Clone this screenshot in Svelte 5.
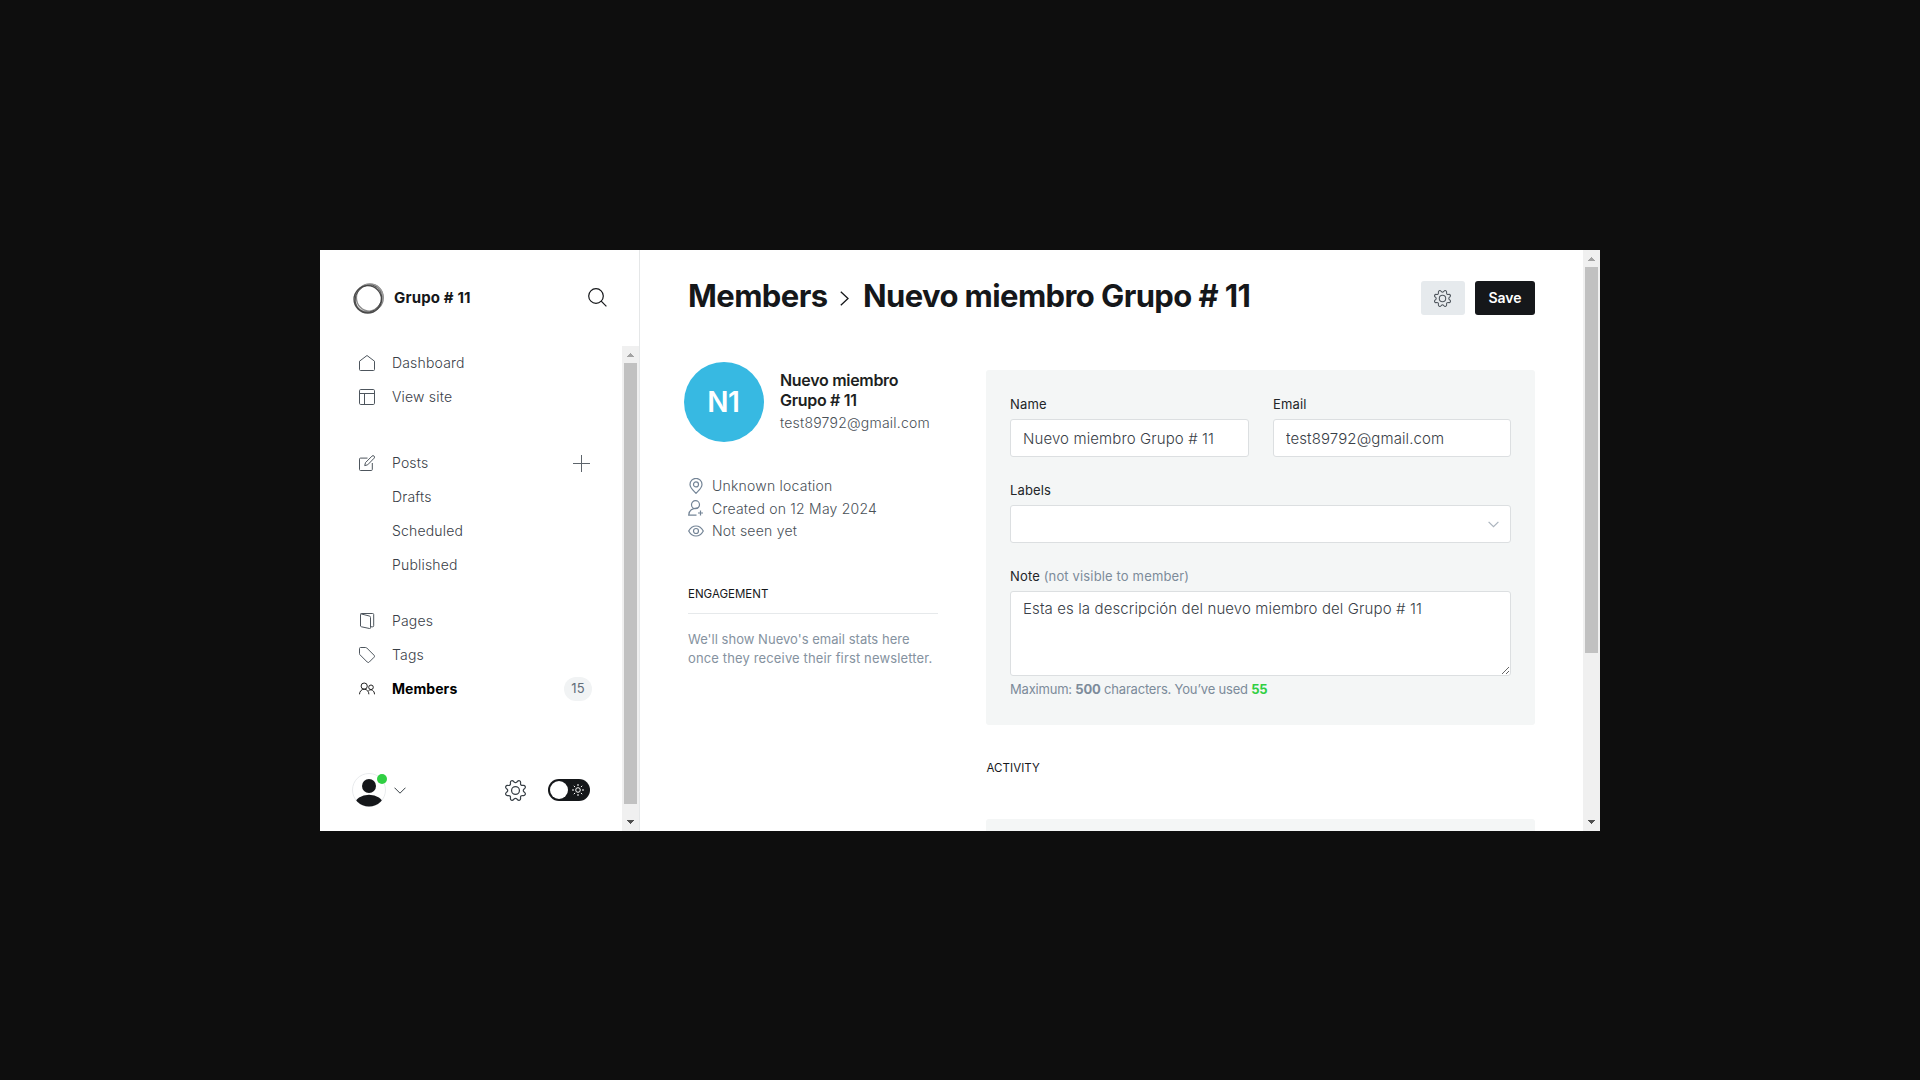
<script>
  const gear =
    'M10.546,2.438a1.957,1.957,0,0,0,2.908,0L14.4,1.4a1.959,1.959,0,0,1,3.41,1.413l-.071,1.4A1.958,1.958,0,0,0,19.79,6.266l1.4-.071A1.959,1.959,0,0,1,22.6,9.6l-1.04.941a1.957,1.957,0,0,0,0,2.908l1.04.942a1.959,1.959,0,0,1-1.413,3.41l-1.4-.071a1.958,1.958,0,0,0-2.056,2.056l.071,1.4A1.959,1.959,0,0,1,14.4,22.6l-.941-1.041a1.959,1.959,0,0,0-2.908,0L9.606,22.6A1.959,1.959,0,0,1,6.2,21.192l.072-1.4a1.958,1.958,0,0,0-2.056-2.056l-1.4.071A1.958,1.958,0,0,1,1.4,14.394l1.041-.942a1.957,1.957,0,0,0,0-2.908L1.4,9.606A1.958,1.958,0,0,1,2.809,6.2l1.4.071A1.958,1.958,0,0,0,6.264,4.211L6.192,2.81A1.959,1.959,0,0,1,9.606,1.4Z';
  let name = $state('Nuevo miembro Grupo # 11');
  let email = $state('test89792@gmail.com');
  let note = $state('Esta es la descripción del nuevo miembro del Grupo # 11');
  const navGroups = [
    [{ label: 'Dashboard', icon: 'home' }, { label: 'View site', icon: 'site' }],
    [{ label: 'Posts', icon: 'posts', add: true }, { label: 'Drafts' }, { label: 'Scheduled' }, { label: 'Published' }],
    [{ label: 'Pages', icon: 'pages' }, { label: 'Tags', icon: 'tags' }, { label: 'Members', icon: 'members', count: 15, active: true }]
  ];
</script>

{#snippet scrollbar(kind)}
  <div class="scrollbar {kind}">
    <svg class="arrow up" viewBox="0 0 17 17"><path d="M5 11h7v-1h-1v-1h-1v-1h-1v-1h-1v1h-1v1h-1v1h-1z" /></svg>
    <div class="thumb"></div>
    <svg class="arrow down" viewBox="0 0 17 17"><path d="M5 6h7v1h-1v1h-1v1h-1v1h-1v-1h-1v-1h-1v-1h-1z" /></svg>
  </div>
{/snippet}

{#snippet navIcon(icon)}
  <svg class="nav-icon" viewBox="0 0 16 16">
    {#if icon === 'home'}
      <path d="M.5 6.2v8.3a1 1 0 0 0 1 1h13a1 1 0 0 0 1-1V6.2L8 .5z" />
    {:else if icon === 'site'}
      <rect x=".5" y=".5" width="15" height="15" rx="1.2" /><path d="M.5 4.500h15M5.500 4.500v11" />
    {:else if icon === 'posts'}
      <path d="M8.500 3.100h-7a1 1 0 0 0-1 1v10.400a1 1 0 0 0 1 1h10.800a1 1 0 0 0 1-1V8" />
      <path d="M8.700 9.800l-3 .8.8-3L13 1.100a1.400 1.400 0 0 1 2.100 2.100z" />
    {:else if icon === 'pages'}
      <path d="M1.500 13V1.500a1 1 0 0 1 1-1h11.200a1 1 0 0 1 1 1v11.300a1 1 0 0 1-1 1h-1.900" />
      <path d="M1.700.800l8.600 2.200a1.500 1.500 0 0 1 1.200 1.500v10.200a.8.8 0 0 1-1 .8l-8-1.700a1.200 1.200 0 0 1-1-1.200" />
    {:else if icon === 'tags'}
      <path d="M1.500.5h5.200a1.500 1.500 0 0 1 1.100.5l7.300 7.300a1.300 1.300 0 0 1 0 1.900l-4.900 4.900a1.300 1.300 0 0 1-1.900 0L1 7.800a1.500 1.500 0 0 1-.5-1.100V1.500a1 1 0 0 1 1-1z" />
    {:else}
      <circle cx="5.200" cy="5.100" r="3.100" /><path d="M.5 13.300c0-2.800 2-5.100 4.700-5.100s4.700 2.300 4.700 5.100" />
      <circle cx="12" cy="6.300" r="2.300" /><path d="M9.500 9.600c2.800-1.900 6 .1 6 3.700" />
    {/if}
  </svg>
{/snippet}

<div class="stage">
  <div class="window">
    <aside>
      <header class="brand">
        <svg class="logo" viewBox="0 0 30 30">
          <ellipse cx="16.300" cy="14.200" rx="13" ry="13.200" stroke="#8a8a8a" stroke-width="1.300" />
          <ellipse cx="15.500" cy="14.900" rx="14" ry="12.400" stroke="#9a9a9a" stroke-width="1.500" transform="rotate(-42 15 15)" />
          <ellipse cx="14.300" cy="15.800" rx="13.300" ry="13.200" stroke="#4a4a4a" stroke-width="1.300" />
          <ellipse cx="15" cy="15.200" rx="12.300" ry="13.800" stroke="#444" stroke-width=".8" transform="rotate(38 15 15)" />
        </svg>
        <strong>Grupo # 11</strong>
        <svg class="search" viewBox="0 0 19 19"><circle cx="8" cy="8" r="7.300" /><path d="M13.200 13.200l5.200 5.200" /></svg>
      </header>
      <div class="side-body">
        <div class="side-content">
          <nav>
            {#each navGroups as group}
              <ul>
                {#each group as item}
                  <li class:active={item.active}>
                    <span class="icon-slot">{#if item.icon}{@render navIcon(item.icon)}{/if}</span>
                    <span class="label">{item.label}</span>
                    {#if item.add}<svg class="plus" viewBox="0 0 17 17"><path d="M8.500 0v17M0 8.500h17" /></svg>{/if}
                    {#if item.count}<span class="count">{item.count}</span>{/if}
                  </li>
                {/each}
              </ul>
            {/each}
          </nav>
          <footer>
            <div class="user">
              <svg viewBox="0 0 34 34">
                <defs><clipPath id="disc"><circle cx="17" cy="17" r="16.500" /></clipPath></defs>
                <circle cx="17" cy="17" r="16.500" fill="#fff" stroke="#e9ebed" />
                <g fill="#15171a" stroke="none" clip-path="url(#disc)"><circle cx="17" cy="13" r="7" /><ellipse cx="17" cy="31" rx="14" ry="9.300" /></g>
              </svg>
              <i class="online"></i>
            </div>
            <svg class="chev" viewBox="0 0 12 7"><path d="M.5.700L6 6.200 11.500.700" /></svg>
            <svg class="settings" viewBox="0 0 24 24"><path d={gear} /><circle cx="12" cy="12" r="4.500" /></svg>
            <div class="toggle">
              <i></i>
              <svg viewBox="0 0 12 12"><circle cx="6" cy="6" r="2.300" /><path d="M6 0v2M6 10v2M0 6h2M10 6h2M1.800 1.800l1.300 1.300M8.900 8.900l1.300 1.300M1.800 10.200l1.300-1.300M8.900 3.100l1.300-1.300" /></svg>
            </div>
          </footer>
        </div>
        {@render scrollbar('side')}
      </div>
    </aside>

    <main>
      <div class="page">
        <header class="title-row">
          <h1>
            <span class="crumb">Members</span>
            <svg viewBox="0 0 9 15"><path d="M.8.800L8 7.500.800 14.200" /></svg>
            <span class="current">Nuevo miembro Grupo # 11</span>
          </h1>
          <button class="gear-btn" aria-label="Settings"><svg viewBox="0 0 24 24"><path d={gear} /><circle cx="12" cy="12" r="4.500" /></svg></button>
          <button class="save">Save</button>
        </header>
        <div class="columns">
          <section class="profile">
            <div class="identity">
              <div class="avatar">N1</div>
              <div><h3>Nuevo miembro Grupo # 11</h3><p>{email}</p></div>
            </div>
            <ul class="meta">
              <li><svg viewBox="0 0 16 16"><path d="M8 15.300C5.500 12.700 2 9.800 2 6.400a6 6 0 0 1 12 0c0 3.400-3.500 6.300-6 8.900z" /><circle cx="8" cy="6.400" r="2.500" /></svg>Unknown location</li>
              <li><svg viewBox="0 0 16 16"><circle cx="7.500" cy="4.700" r="4" /><path d="M9.800 8.200C4.500 7.800.7 10.500.7 15.200h7.800M12.500 10.500v5M10 13h5" /></svg>Created on 12 May 2024</li>
              <li><svg viewBox="0 0 16 16"><path d="M.7 8C2.300 5 5 3 8 3s5.700 2 7.300 5C13.700 11 11 13 8 13S2.300 11 .7 8z" /><circle cx="8" cy="8" r="2.500" /></svg>Not seen yet</li>
            </ul>
            <h4>Engagement</h4>
            <p class="stats"><span>We'll show Nuevo's email stats here</span><br />once they receive their first newsletter.</p>
          </section>
          <section class="details">
            <div class="panel">
              <div class="pair">
                <label>Name<input bind:value={name} /></label>
                <label>Email<input bind:value={email} /></label>
              </div>
              <div class="field">Labels
                <div class="select"><svg viewBox="0 0 11 7"><path d="M.6.800l4.900 4.900L10.400.800" /></svg></div>
              </div>
              <label class="field"><span>Note <em>(not visible to member)</em></span><textarea bind:value={note}></textarea></label>
              <p class="limit">Maximum: <b>500</b> characters. You’ve used <b class="used">{note.length}</b></p>
            </div>
            <h4>Activity</h4>
            <div class="panel next"></div>
          </section>
        </div>
      </div>
      {@render scrollbar('page-bar')}
    </main>
  </div>
</div>

<style>
  :global(body) { background: #0e0e0e; }
  * { box-sizing: border-box; margin: 0; padding: 0; }
  ul { list-style: none; }
  svg { display: block; flex: none; fill: none; stroke: currentColor; }
  .stage { height: 1080px; padding: 250px 320px 249px; font-family: Inter, "Liberation Sans", sans-serif; font-weight: 350; color: #15171a; }
  .window { display: flex; height: 581px; background: #fff; overflow: hidden; }

  aside { width: 320px; border-right: 1px solid #e5e7e8; display: flex; flex-direction: column; }
  .brand { height: 96px; display: flex; align-items: center; padding: 0 32px; }
  .brand strong { flex: 1; margin-left: 10.500px; font-size: 15px; font-weight: 650; letter-spacing: 0.15px; line-height: 20px; }
  .logo { width: 31px; height: 31px; margin-left: 0.5px; }
  .search { width: 19px; height: 19px; stroke-width: 1.2; margin: 0 0.5px 1px 0; }
  .side-body { flex: 1; display: flex; min-height: 0; }
  .side-content { flex: 1; display: flex; flex-direction: column; justify-content: space-between; }
  nav { display: flex; flex-direction: column; gap: 32px; }
  nav ul + ul + ul { margin-top: -10px; }
  li { display: flex; align-items: center; }
  nav li { height: 34px; padding: 0 30px 0 39px; font-size: 14px; color: #394047; letter-spacing: 0.18px; }
  nav li.active { color: #000; font-weight: 700; letter-spacing: 0.06px; }
  .icon-slot { width: 33px; color: #4d555d; }
  .active .icon-slot { color: #222; }
  .nav-icon { width: 16px; height: 16px; }
  .label { flex: 1; line-height: 20px; }
  .plus { width: 17px; height: 17px; color: #5d646b; margin-right: 2px; }
  .count { width: 28px; height: 24px; border-radius: 12px; background: #f1f3f4; color: #626d79; text-align: center; line-height: 23px; font-size: 13px; font-weight: 400; }
  footer { height: 82px; display: flex; align-items: center; padding: 0 32px; }
  .user { position: relative; width: 34px; height: 34px; }
  .online { position: absolute; right: -1px; top: 1px; width: 10px; height: 10px; border-radius: 50%; background: #30cf43; }
  .chev { width: 12px; height: 7px; margin: 0 auto 0 8px; color: #394047; }
  .settings { width: 21px; height: 21px; margin: 0 22px 0 0; color: #394047; stroke-width: 1.400; }
  .toggle { width: 42px; height: 22px; border-radius: 11px; background: #15171a; padding: 2px 6px 2px 2px; display: flex; align-items: center; justify-content: space-between; color: #fff; }
  .toggle i { width: 18px; height: 18px; border-radius: 50%; background: #fff; }
  .toggle svg { width: 12px; height: 12px; }

  .scrollbar { width: 17px; background: #f0f0f0; display: flex; flex-direction: column; flex: none; }
  .arrow { width: 17px; height: 17px; stroke: none; fill: #505050; }
  .up { fill: #a3a3a3; }
  .down { margin-top: auto; }
  .thumb { width: 13px; margin-left: 2px; background: #c1c1c1; height: 386px; }
  .side .thumb { height: 441px; }

  main { flex: 1; display: flex; min-width: 0; }
  .page { flex: 1; padding: 0 48px; overflow: hidden; }
  .title-row { display: flex; align-items: center; height: 96px; }
  h1 { flex: 1; display: flex; align-items: center; font-size: 31px; font-weight: 700; line-height: 38px; padding-bottom: 5px; letter-spacing: -0.6px; white-space: nowrap; }
  h1 svg { width: 9px; height: 15px; margin: 6px 14px 0 12.500px; stroke-width: 1.300; }
  button { height: 34px; border: 0; border-radius: 3px; font: 600 14px/34px Inter, sans-serif; }
  .gear-btn { width: 44px; background: #e6eaed; display: flex; align-items: center; justify-content: center; color: #50575e; margin-right: 10px; padding-right: 1px; }
  .gear-btn svg { width: 17px; height: 17px; stroke-width: 1.500; }
  .save { width: 60px; background: #15171a; color: #fff; }
  .columns { display: flex; gap: 48px; }
  .profile { width: 250px; padding-top: 16px; }
  .identity { display: flex; align-items: center; gap: 16px; margin-left: -4px; }
  .avatar { flex: none; width: 80px; height: 80px; padding-right: 1.500px; border-radius: 50%; background: #37b9e2; color: #fff; font-size: 28px; font-weight: 600; text-align: center; line-height: 81px; letter-spacing: -0.6px; }
  h3 { font-size: 16px; font-weight: 600; line-height: 20px; width: 135px; letter-spacing: -0.3px; color: #1d1f22; }
  .identity p { font-size: 14px; line-height: 22px; color: #495057; margin-top: 2px; margin-bottom: 1px; letter-spacing: 0.22px; }
  .meta { margin-top: 32.400px; }
  .meta li { height: 22.500px; font-size: 14px; color: #495057; gap: 8px; letter-spacing: 0.22px; }
  .meta svg { width: 16px; height: 16px; color: #738496; stroke-width: 1.200; }
  h4 { font-size: 11.500px; font-weight: 400; text-transform: uppercase; letter-spacing: 0; line-height: 16px; }
  .profile h4 { margin-top: 44.100px; padding-bottom: 12px; height: 28px; border-bottom: 1px solid #e6e9eb; }
  .stats { margin-top: 16px; font-size: 13px; line-height: 19px; color: #8592a0; white-space: nowrap; letter-spacing: 0.14px; font-weight: 400; }
  .stats span { letter-spacing: 0.03px; }
  .details { flex: 1; padding-top: 24px; }
  .panel { height: 355px; background: #f4f6f6; border-radius: 3px; padding: 24px; font-size: 13px; font-weight: 400; line-height: 20px; letter-spacing: 0.15px; color: #222528; }
  .pair { display: grid; grid-template-columns: 239px 238px; gap: 24px; }
  label { display: block; }
  input, textarea, .select { display: block; width: 100%; height: 38px; margin-top: 5px; border: 1px solid #dcdfe1; border-radius: 3px; background: #fff; padding: 0 12px; font: 350 15px/22px Inter, sans-serif; letter-spacing: 0.11px; color: #394047; outline: none; }
  .field { margin-top: 23px; }
  .select { display: flex; align-items: center; justify-content: flex-end; padding-right: 11px; }
  .select svg { width: 11px; height: 7px; color: #abb4be; stroke-width: 1.200; }
  em { font-style: normal; color: #7c8b9a; }
  textarea { height: 85px; padding-top: 6px; resize: both; }
  .limit { margin-top: 3px; color: #7c8b9a; letter-spacing: -0.2px; }
  .used { color: #30cf43; }
  .details h4 { margin-top: 35px; height: 59px; padding-left: 0.5px; letter-spacing: 0.05px; }
</style>
